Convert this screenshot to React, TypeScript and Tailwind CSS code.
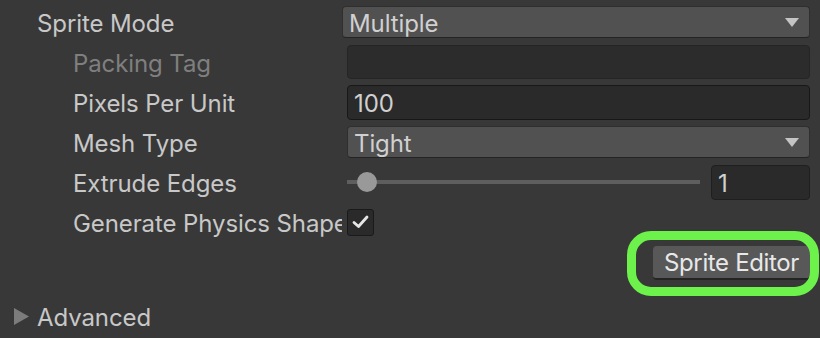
import { type ReactNode } from "react";

function Row({ indent, label, dim, children }: { indent?: boolean; label: string; dim?: boolean; children: ReactNode }) {
  return (
    <div className="flex items-center h-[40px]">
      <div
        className={`w-[342px] shrink-0 overflow-hidden whitespace-nowrap pt-[4px] ${indent ? "pl-[73px]" : "pl-[37px]"} ${
          dim ? "text-[#7f7f7f]" : "text-[#c8c8c8]"
        }`}
      >
        {label}
      </div>
      <div className={`flex-1 flex items-center pr-[10px] ${indent ? "pl-[5px]" : "pl-0"}`}>{children}</div>
    </div>
  );
}

function Dropdown({ value }: { value: string }) {
  return (
    <div className="flex-1 h-[32px] flex items-center justify-between rounded-[4px] bg-[#515151] border border-[#2f2f2f] border-b-[#242424] pl-[6px] pr-[10px] text-[#d0d0d0]">
      <span className="pt-[3px]">{value}</span>
      <svg width="14" height="9" viewBox="0 0 14 9">
        <path d="M0 0 H14 L7 9 Z" fill="#c4c4c4" />
      </svg>
    </div>
  );
}

export default function App() {
  return (
    <div
      className="w-[820px] h-[338px] bg-[#383838] text-[24px] leading-[1.25] tracking-[-0.1px] pt-[2px] overflow-hidden"
      style={{ fontFamily: "Inter, 'Noto Sans', sans-serif" }}
    >
      <Row label="Sprite Mode">
        <Dropdown value="Multiple" />
      </Row>
      <Row indent dim label="Packing Tag">
        <div className="flex-1 h-[34px] rounded-[4px] bg-[#2c2c2c] border border-[#252525]" />
      </Row>
      <Row indent label="Pixels Per Unit">
        <div className="flex-1 h-[35px] flex items-center rounded-[4px] bg-[#2a2a2a] border border-[#181818] pl-[6px] pt-[3px] text-[#d0d0d0]">
          100
        </div>
      </Row>
      <Row indent label="Mesh Type">
        <Dropdown value="Tight" />
      </Row>
      <Row indent label="Extrude Edges">
        <div className="flex-1 flex items-center gap-[11px]">
          <div className="relative flex-1 h-[20px] flex items-center">
            <div className="w-full h-[4px] bg-[#5e5e5e]" />
            <div className="absolute left-[10px] top-0 w-[20px] h-[20px] rounded-full bg-[#999999]" />
          </div>
          <div className="w-[99px] h-[35px] flex items-center rounded-[4px] bg-[#2a2a2a] border border-[#1f1f1f] pl-[6px] pt-[3px] text-[#d0d0d0]">
            1
          </div>
        </div>
      </Row>
      <Row indent label="Generate Physics Shape">
        <div className="w-[27px] h-[27px] rounded-[3px] bg-[#2a2a2a] border border-[#1a1a1a] flex items-center justify-center">
          <svg width="17" height="14" viewBox="0 0 17 14">
            <path d="M2 7.5 L6.5 11.5 L15 2" fill="none" stroke="#e6e6e6" strokeWidth="2.8" strokeLinecap="round" strokeLinejoin="round" />
          </svg>
        </div>
      </Row>
      <div className="flex justify-end pr-[10px] mt-[4px]">
        <div className="relative">
          <button className="h-[34px] w-[157px] rounded-[4px] bg-[#585858] border-b-2 border-[#242424] pt-[2px] text-[#e8e8e8] text-[24px] leading-[1.25] tracking-[-0.35px]">
            Sprite Editor
          </button>
          <div className="absolute left-[-26px] right-[-9px] top-[-15px] bottom-[-16px] rounded-[24px] border-[9px] border-[#6df24b]" />
        </div>
      </div>
      <div className="flex items-center h-[36px] mt-[18px] pl-[14px] gap-[8px] text-[#c8c8c8]">
        <svg width="15" height="17" viewBox="0 0 15 17">
          <path d="M0 0 L15 8.5 L0 17 Z" fill="#7c7c7c" />
        </svg>
        <span className="pt-[4px]">Advanced</span>
      </div>
    </div>
  );
}
